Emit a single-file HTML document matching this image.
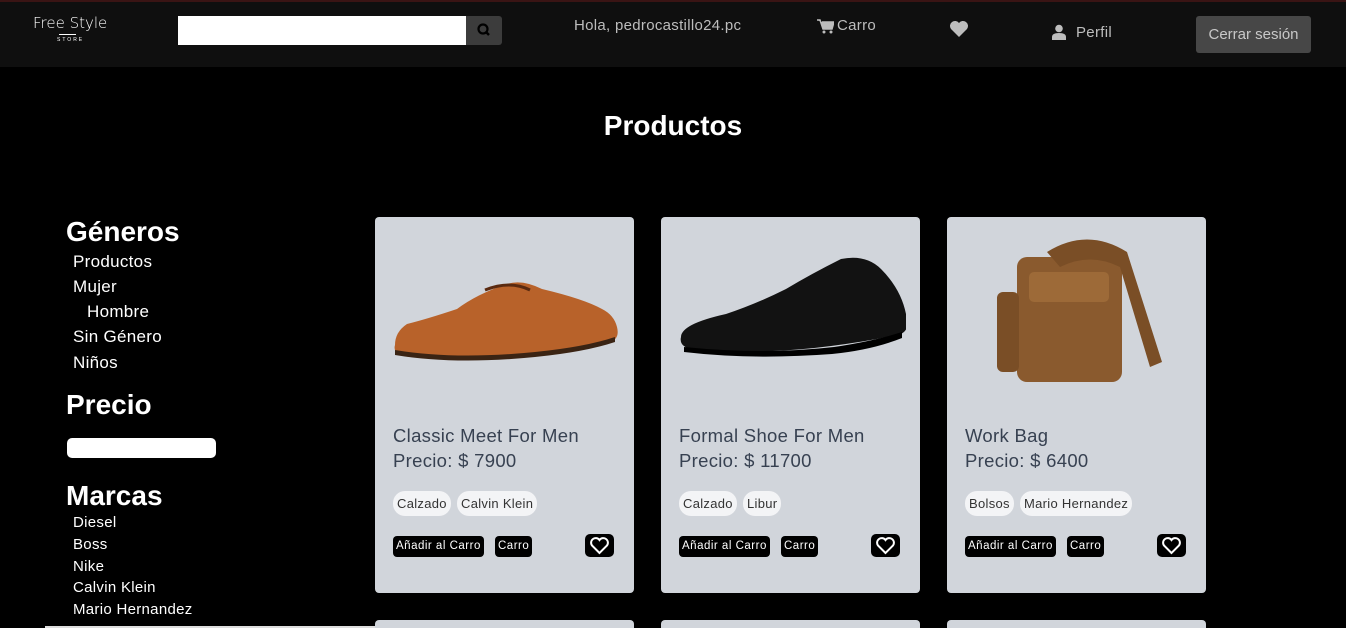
<!DOCTYPE html>
<html><head><meta charset="utf-8"><style>
*{margin:0;padding:0;box-sizing:border-box}
html,body{width:1346px;height:628px;overflow:hidden}
body{background:#000;font-family:"Liberation Sans",sans-serif;position:relative;color:#fff}
.hdr{position:absolute;left:0;top:0;width:1346px;height:67px;background:#0f0f0f;border-top:2px solid #3a1414}
.abs{position:absolute}
.nav{color:#bdbdbd;font-size:15px;letter-spacing:0.3px}
.card{position:absolute;top:217px;width:259px;height:376px;background:#d1d5db;border-radius:4px}
.card2{position:absolute;top:620px;width:259px;height:8px;background:#d1d5db;border-radius:4px 4px 0 0}
.t{position:absolute;left:18px;top:206px;color:#374151;font-size:18.5px;line-height:25px;letter-spacing:0.3px}
.tag{position:absolute;top:274px;height:25px;background:#f3f4f6;border-radius:12px;color:#333;font-size:13px;line-height:25px;padding:0 4px;letter-spacing:0.3px}
.btn{position:absolute;top:319px;height:21px;background:#000;border-radius:4px;color:#fff;font-size:11.5px;line-height:21px;padding:0 3px;letter-spacing:0.5px}
.hb{position:absolute;left:210px;top:317px;width:29px;height:23px;background:#000;border-radius:5px}
.side{position:absolute;left:73px;font-size:16px;letter-spacing:0.3px}
</style></head><body>
<div class="hdr">
 <div class="abs" style="left:33px;top:12px;font-size:15px;color:#fff;font-family:'DejaVu Sans',sans-serif;font-weight:300">Free Style</div>
 <div class="abs" style="left:59px;top:32px;width:17px;height:1px;background:#fff"></div>
 <div class="abs" style="left:57px;top:35px;font-size:5px;letter-spacing:2px">STORE</div>
 <div class="abs" style="left:178px;top:14px;width:289px;height:29px;background:#fff"></div>
 <div class="abs" style="left:466px;top:14px;width:36px;height:29px;background:#3c3c3c;border-radius:0 3px 3px 0">
  <svg width="36" height="29"><circle cx="17" cy="13" r="4.5" stroke="#000" stroke-width="2.2" fill="none"/><line x1="20" y1="16" x2="23" y2="19" stroke="#000" stroke-width="2.5"/></svg></div>
 <div class="abs nav" style="left:574px;top:15px">Hola, pedrocastillo24.pc</div>
 <svg class="abs" style="left:817px;top:17px" width="17" height="15"><path d="M0 1h3l3 9h9l2-7H5" fill="#bdbdbd" stroke="#bdbdbd" stroke-width="1.5"/><circle cx="7" cy="13" r="1.5" fill="#bdbdbd"/><circle cx="14" cy="13" r="1.5" fill="#bdbdbd"/></svg>
 <div class="abs nav" style="left:837px;top:15px">Carro</div>
 <svg class="abs" style="left:949px;top:18px" width="20" height="18"><path d="M10 17L2 9A4.5 4.5 0 0 1 10 3A4.5 4.5 0 0 1 18 9Z" fill="#bdbdbd"/></svg>
 <svg class="abs" style="left:1052px;top:22px" width="14" height="16"><circle cx="7" cy="4.5" r="3.8" fill="#bdbdbd"/><path d="M0 16v-3q0-4 7-4t7 4v3z" fill="#bdbdbd"/></svg>
 <div class="abs nav" style="left:1076px;top:22px">Perfil</div>
 <div class="abs" style="left:1196px;top:14px;width:115px;height:37px;background:#474747;border-radius:3px;color:#c8c8c8;font-size:15px;line-height:37px;text-align:center">Cerrar sesión</div>
</div>
<div class="abs" style="left:0;width:1346px;top:110px;text-align:center;font-size:28px;font-weight:bold">Productos</div>
<div class="abs" style="left:66px;top:216px;font-size:28px;font-weight:bold">Géneros</div>
<div class="side" style="top:252px;font-size:17px">Productos</div>
<div class="side" style="top:277px;font-size:17px">Mujer</div>
<div class="side" style="left:87px;top:302px;font-size:17px">Hombre</div>
<div class="side" style="top:327px;font-size:17px">Sin Género</div>
<div class="side" style="top:353px;font-size:17px">Niños</div>
<div class="abs" style="left:66px;top:389px;font-size:28px;font-weight:bold">Precio</div>
<div class="abs" style="left:67px;top:438px;width:149px;height:20px;background:#fff;border-radius:5px"></div>
<div class="abs" style="left:66px;top:480px;font-size:28px;font-weight:bold">Marcas</div>
<div class="side" style="top:514px;font-size:15px">Diesel</div>
<div class="side" style="top:536px;font-size:15px">Boss</div>
<div class="side" style="top:558px;font-size:15px">Nike</div>
<div class="side" style="top:579px;font-size:15px">Calvin Klein</div>
<div class="side" style="top:601px;font-size:15px">Mario Hernandez</div>
<div class="abs" style="left:45px;top:626px;width:345px;height:2px;background:#ddd"></div>

<div class="card" style="left:375px">
 <svg class="abs" style="left:15px;top:28px" width="230" height="130"><path d="M5 100q-3 10 15 12q60 3 130-5q40-4 70-10q10-3 7-15q-3-12-15-18q-18-10-60-20q-20-10-35-5q-30 10-50 25q-30 10-50 15q-12 8-12 21z" fill="#b8622a"/><path d="M5 105q60 10 140 2q50-5 80-15v5q-30 10-80 15q-80 8-140-2z" fill="#3a2414"/><path d="M95 45q25-10 45 0" stroke="#5a2a10" stroke-width="3" fill="none"/></svg>
 <div class="t">Classic Meet For Men<br>Precio: $ 7900</div>
 <div class="tag" style="left:18px">Calzado</div><div class="tag" style="left:82px">Calvin Klein</div>
 <div class="btn" style="left:18px">Añadir al Carro</div><div class="btn" style="left:120px">Carro</div>
 <div class="hb"><svg width="29" height="23"><path d="M14.5 19L7 11.5A4 4 0 0 1 14.5 6A4 4 0 0 1 22 11.5Z" fill="none" stroke="#fff" stroke-width="2"/></svg></div>
</div>
<div class="card" style="left:661px">
 <svg class="abs" style="left:15px;top:25px" width="230" height="130"><path d="M5 95q-3 12 20 14q70 3 130-5q40-5 70-12q10-5 5-20q-5-25-25-45q-15-15-40-10q-30 15-55 30q-30 15-60 25q-45 10-45 23z" fill="#121212"/><path d="M8 105q80 8 150 0q40-6 68-15v6q-30 12-70 16q-80 6-148-2z" fill="#000"/></svg>
 <div class="t">Formal Shoe For Men<br>Precio: $ 11700</div>
 <div class="tag" style="left:18px">Calzado</div><div class="tag" style="left:82px">Libur</div>
 <div class="btn" style="left:18px">Añadir al Carro</div><div class="btn" style="left:120px">Carro</div>
 <div class="hb"><svg width="29" height="23"><path d="M14.5 19L7 11.5A4 4 0 0 1 14.5 6A4 4 0 0 1 22 11.5Z" fill="none" stroke="#fff" stroke-width="2"/></svg></div>
</div>
<div class="card" style="left:947px">
 <svg class="abs" style="left:40px;top:15px" width="180" height="160"><rect x="30" y="25" width="105" height="125" rx="10" fill="#8a5a2e"/><rect x="42" y="40" width="80" height="30" rx="5" fill="#9d6a38"/><path d="M60 20q40-25 80 0l35 110-12 5-30-100q-30-15-60 0z" fill="#7a4e26"/><rect x="10" y="60" width="22" height="80" rx="6" fill="#7a4e26"/></svg>
 <div class="t">Work Bag<br>Precio: $ 6400</div>
 <div class="tag" style="left:18px">Bolsos</div><div class="tag" style="left:73px">Mario Hernandez</div>
 <div class="btn" style="left:18px">Añadir al Carro</div><div class="btn" style="left:120px">Carro</div>
 <div class="hb"><svg width="29" height="23"><path d="M14.5 19L7 11.5A4 4 0 0 1 14.5 6A4 4 0 0 1 22 11.5Z" fill="none" stroke="#fff" stroke-width="2"/></svg></div>
</div>
<div class="card2" style="left:375px"></div><div class="card2" style="left:661px"></div><div class="card2" style="left:947px"></div>
</body></html>
